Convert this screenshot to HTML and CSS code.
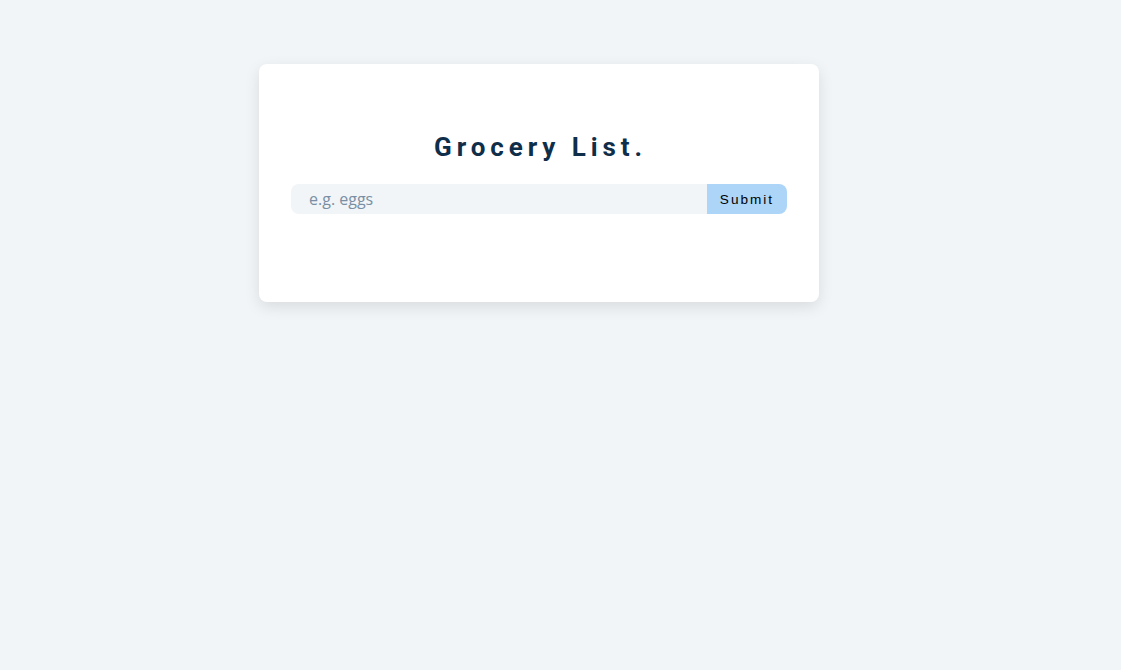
FILE: index.html
```html
<!DOCTYPE html>
<html lang="en">
<head>
<meta charset="utf-8">
<title>Grocery List</title>
<link rel="stylesheet" href="styles.css">
</head>
<body>
  <section class="section-center">
    <form class="grocery-form">
      <h3 class="title">Grocery List.</h3>
      <div class="form-control">
        <input type="text" class="grocery-input" placeholder="e.g. eggs">
        <button type="submit" class="submit-btn">Submit</button>
      </div>
    </form>
  </section>
</body>
</html>
```
FILE: styles.css
```css
* { box-sizing: border-box; margin: 0; padding: 0; }
html, body { height: 100%; }
body {
  background: #f1f5f8;
  font-family: "Open Sans", sans-serif;
  padding-top: 64px;
  padding-left: 259px;
}
.section-center {
  width: 560px;
  background: #fff;
  border-radius: 8px;
  box-shadow: 0 5px 15px rgba(0, 0, 0, 0.1);
  padding: 67px 32px 88px;
}
.title {
  font-family: Roboto, sans-serif;
  font-weight: 700;
  font-size: 26px;
  line-height: 32px;
  letter-spacing: 4.9px;
  color: #0f2e4a;
  text-align: center;
  margin-bottom: 21px;
  padding-left: 3px;
}
.form-control {
  display: flex;
  height: 30px;
}
.grocery-input {
  flex: 1 0 auto;
  background: #f1f5f8;
  border: none;
  border-radius: 8px 0 0 8px;
  padding: 0 16px 0 18px;
  font-family: "Open Sans", sans-serif;
  font-size: 16px;
  color: #617d98;
  outline: none;
}
.grocery-input::placeholder { color: #7a8fa3; }
.submit-btn {
  flex: 0 0 80px;
  background: #acd5f7;
  border: none;
  border-radius: 0 8px 8px 0;
  font-family: "Liberation Sans", Arial, sans-serif;
  font-size: 13.6px;
  letter-spacing: 2px;
  color: #000;
  padding-top: 1px;
}
```
